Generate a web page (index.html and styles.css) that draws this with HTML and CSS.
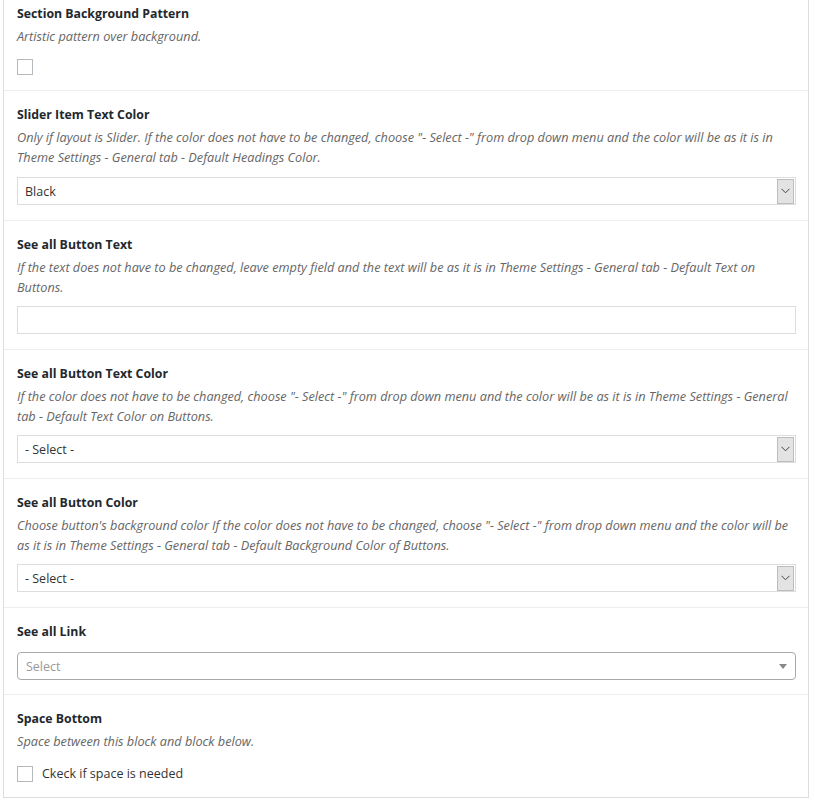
FILE: index.html
```html
<!DOCTYPE html>
<html>
<head>
<meta charset="utf-8">
<link rel="stylesheet" href="styles.css">
</head>
<body>
<div class="panel">
  <div class="field field-first">
    <div class="title">Section Background Pattern</div>
    <div class="desc">Artistic pattern over background.</div>
    <div class="check-row"><span class="checkbox"></span></div>
  </div>
  <div class="field field-slider">
    <div class="title">Slider Item Text Color</div>
    <div class="desc">Only if layout is Slider. If the color does not have to be changed, choose "- Select -" from drop down menu and the color will be as it is in Theme Settings - General tab - Default Headings Color.</div>
    <div class="select"><span class="select-value">Black</span><span class="select-arrow"><svg width="9" height="6" viewBox="0 0 9 6"><path d="M0.5 0.8 L4.5 4.8 L8.5 0.8" fill="none" stroke="#444" stroke-width="1"/></svg></span></div>
  </div>
  <div class="field">
    <div class="title">See all Button Text</div>
    <div class="desc">If the text does not have to be changed, leave empty field and the text will be as it is in Theme Settings - General tab - Default Text on Buttons.</div>
    <div class="text-input"></div>
  </div>
  <div class="field">
    <div class="title">See all Button Text Color</div>
    <div class="desc">If the color does not have to be changed, choose "- Select -" from drop down menu and the color will be as it is in Theme Settings - General tab - Default Text Color on Buttons.</div>
    <div class="select"><span class="select-value">- Select -</span><span class="select-arrow"><svg width="9" height="6" viewBox="0 0 9 6"><path d="M0.5 0.8 L4.5 4.8 L8.5 0.8" fill="none" stroke="#444" stroke-width="1"/></svg></span></div>
  </div>
  <div class="field">
    <div class="title">See all Button Color</div>
    <div class="desc">Choose button's background color If the color does not have to be changed, choose "- Select -" from drop down menu and the color will be as it is in Theme Settings - General tab - Default Background Color of Buttons.</div>
    <div class="select"><span class="select-value">- Select -</span><span class="select-arrow"><svg width="9" height="6" viewBox="0 0 9 6"><path d="M0.5 0.8 L4.5 4.8 L8.5 0.8" fill="none" stroke="#444" stroke-width="1"/></svg></span></div>
  </div>
  <div class="field field-link">
    <div class="title">See all Link</div>
    <div class="select2"><span class="placeholder">Select</span><span class="tri"></span></div>
  </div>
  <div class="field field-last">
    <div class="title">Space Bottom</div>
    <div class="desc">Space between this block and block below.</div>
    <label class="check-row"><span class="checkbox"></span><span class="check-label">Ckeck if space is needed</span></label>
  </div>
</div>
</body>
</html>
```
FILE: styles.css
```css
html, body {
  margin: 0;
  padding: 0;
  background: #fff;
}
body {
  font-family: "Open Sans", "Noto Sans", sans-serif;
  font-size: 12.5px;
  color: #333;
}
.panel {
  width: 804px;
  margin: 0 0 0 3px;
  border: 1px solid #ddd;
  border-top: none;
  background: #fff;
}
.field {
  padding: 14px 12px 15px 13px;
  border-top: 1px solid #eee;
}
.field-first {
  border-top: none;
  padding-top: 4px;
}
.title {
  font-size: 12.3px;
  font-weight: 700;
  line-height: 20px;
  color: #23282d;
}
.desc {
  font-size: 12.7px;
  font-style: italic;
  color: #666;
  line-height: 20px;
  margin-top: 2px;
}
.check-row {
  display: flex;
  align-items: center;
  gap: 9px;
  margin-top: 13px;
}
.field-last .check-row {
  margin-top: 14px;
}
.field-last {
  padding-bottom: 15px;
}
.checkbox {
  width: 14px;
  height: 14px;
  border: 1px solid #b4b9be;
  background: #fff;
  box-sizing: content-box;
}
.check-label {
  font-size: 12.5px;
  color: #333;
}
.select {
  margin-top: 9px;
  height: 28px;
  box-sizing: border-box;
  border: 1px solid #ddd;
  display: flex;
  align-items: center;
  justify-content: space-between;
  padding: 0 1px 0 7px;
  color: #333;
}
.field-slider .select {
  margin-top: 10px;
}
.select-arrow {
  width: 17px;
  height: 25px;
  box-sizing: border-box;
  background: #e3e3e3;
  border: 1px solid #bdbdbd;
  display: flex;
  align-items: center;
  justify-content: center;
}
.text-input {
  margin-top: 9px;
  height: 28px;
  box-sizing: border-box;
  border: 1px solid #ddd;
}
.field-link .select2 {
  margin-top: 10px;
}
.field-link {
  padding-bottom: 14px;
}
.select2 {
  height: 28px;
  box-sizing: border-box;
  border: 1px solid #aaa;
  border-radius: 4px;
  display: flex;
  align-items: center;
  justify-content: space-between;
  padding: 0 8px 0 8px;
}
.placeholder {
  color: #999;
}
.tri {
  width: 0;
  height: 0;
  border-left: 4px solid transparent;
  border-right: 4px solid transparent;
  border-top: 5px solid #888;
}
```
